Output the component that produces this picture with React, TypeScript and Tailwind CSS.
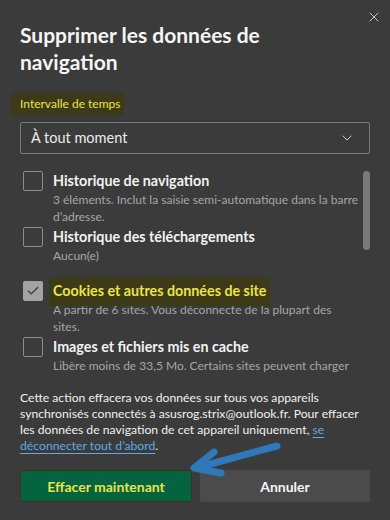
import { Check, ChevronDown, X } from 'lucide-react';

type Item = {
  title: string;
  desc: string;
  checked?: boolean;
  marked?: boolean;
  gap: string;
  descWidth?: string;
};

const items: Item[] = [
  {
    title: 'Historique de navigation',
    desc: '3 éléments. Inclut la saisie semi-automatique dans la barre d\u2019adresse.',
    gap: 'mb-[2px]',
  },
  {
    title: 'Historique des téléchargements',
    desc: 'Aucun(e)',
    gap: 'mb-[17px]',
  },
  {
    title: 'Cookies et autres données de site',
    desc: 'À partir de 6 sites. Vous déconnecte de la plupart des sites.',
    checked: true,
    marked: true,
    gap: 'mb-[2px]',
    descWidth: 'max-w-[300px]',
  },
  {
    title: 'Images et fichiers mis en cache',
    desc: 'Libère moins de 33,5 Mo. Certains sites peuvent charger plus lentement lors de votre prochaine visite.',
    gap: 'mb-0',
  },
];

function Row({ item }: { item: Item }) {
  return (
    <div className={`flex gap-[10px] ${item.gap}`}>
      {item.checked ? (
        <span className="flex h-5 w-5 shrink-0 items-center justify-center rounded-[2px] bg-[#a3a3a3]">
          <Check size={14} strokeWidth={2} className="text-[#333]" />
        </span>
      ) : (
        <span className="h-5 w-5 shrink-0 rounded-[2px] border border-[#8c8c8c]" />
      )}
      <div className="min-w-0 flex-1">
        <div className="text-[14.3px] leading-5 font-bold">
          {item.marked ? (
            <span className="relative z-0 inline-block text-[#ebe34c]">
              <span className="absolute -top-1 -right-1 -bottom-[5px] -left-1 -z-10 bg-[#3d3a17]" />
              {item.title}
            </span>
          ) : (
            <span className="text-[#f2f2f2]">{item.title}</span>
          )}
        </div>
        <p className={`text-[12px] leading-[17px] text-[#a6a6a6] ${item.descWidth ?? ''}`}>
          {item.desc}
        </p>
      </div>
    </div>
  );
}

export default function App() {
  return (
    <div className="relative h-[520px] w-[390px] overflow-hidden bg-[#3b3b3b] font-['Lato',sans-serif] text-white">
      <X size={16} strokeWidth={1.25} className="absolute top-[9px] right-[8px] text-[#e0e0e0]" />

      <div className="px-5 pt-[21px]">
        <h1 className="w-[300px] text-[21px] leading-[27px] font-bold text-[#f5f5f5]">
          Supprimer les données de navigation
        </h1>

        <div className="mt-[18px] -ml-[9px] w-fit bg-[#3d3a17] py-[3px] pr-1 pl-[9px] text-[12px] leading-4 text-[#ebe34c]">
          Intervalle de temps
        </div>

        <div className="mt-[7px] flex h-8 items-center justify-between rounded-[2px] border border-[#7a7a7a] pr-[14px] pl-[10px]">
          <span className="text-[14.5px] text-[#ececec]">À tout moment</span>
          <ChevronDown size={16} strokeWidth={1.5} className="text-[#d0d0d0]" />
        </div>

        <div className="mt-[17px] flex h-[204px] gap-px overflow-hidden">
          <div className="min-w-0 flex-1 pl-[3px]">
            {items.map((item) => (
              <Row key={item.title} item={item} />
            ))}
          </div>
          <div className="h-[79px] w-[7px] shrink-0 rounded-full bg-[#797979]" />
        </div>

        <p className="mt-[15px] text-[12.2px] leading-4 text-[#f0f0f0]">
          Cette action effacera vos données sur tous vos appareils synchronisés connectés à
          asusrog.strix@outlook.fr. Pour effacer les données de navigation de cet appareil
          uniquement,{' '}
          <span className="text-[#62a8e3] underline decoration-1 underline-offset-[3px]">
            se déconnecter tout d&rsquo;abord
          </span>
          .
        </p>

        <div className="mt-[16px] flex gap-2">
          <button className="h-8 flex-1 rounded-[2px] border border-[#3a3414] bg-[#04643f] text-[14px] font-bold text-[#ebe34c]">
            Effacer maintenant
          </button>
          <button className="h-8 flex-1 rounded-[2px] bg-[#4b4b4b] text-[14px] font-bold text-[#f5f5f5]">
            Annuler
          </button>
        </div>
      </div>

      <svg className="pointer-events-none absolute top-0 left-0" width="390" height="520">
        <g stroke="#2f78b9" strokeWidth="7" strokeLinecap="round" strokeLinejoin="round" fill="none">
          <path d="M277 446 L196 468" />
          <path d="M214 452 L194 468 L221 473" />
        </g>
      </svg>
    </div>
  );
}
